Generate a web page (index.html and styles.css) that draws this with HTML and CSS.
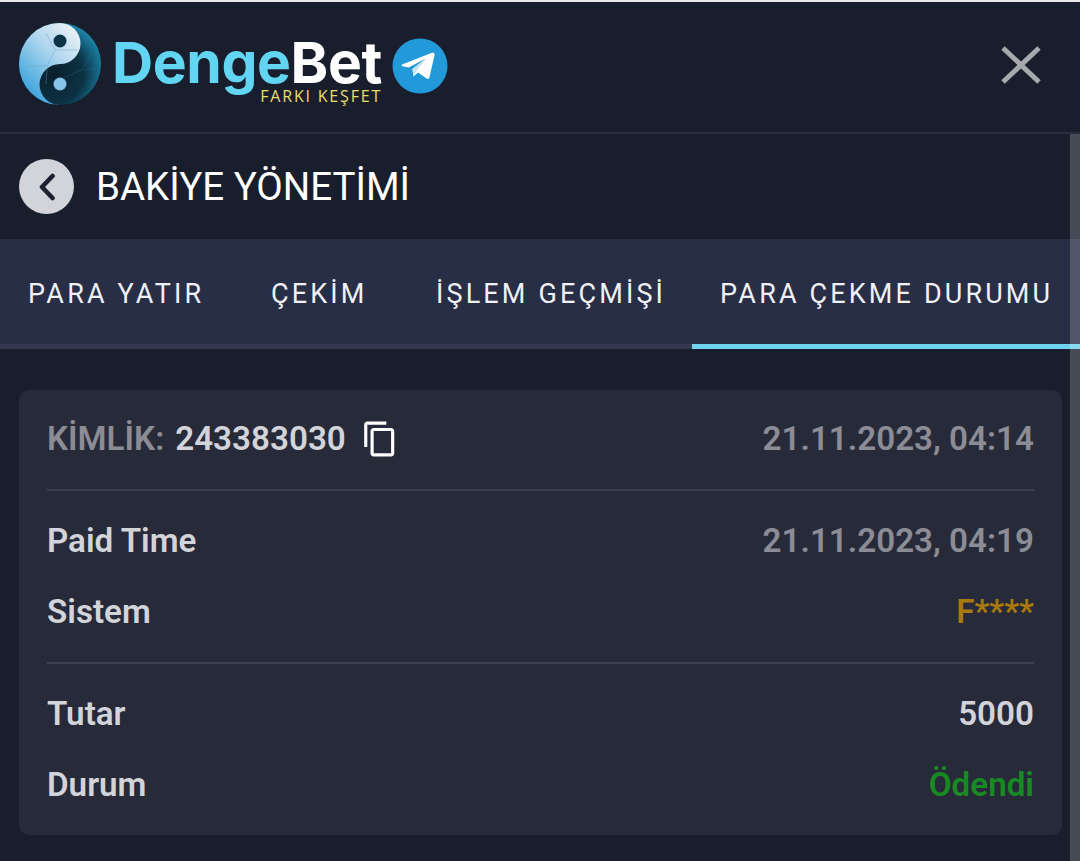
FILE: index.html
```html
<!DOCTYPE html>
<html lang="tr">
<head>
    <meta charset="UTF-8">
    <meta name="viewport" content="width=device-width, initial-scale=1.0">
    <title>DengeBet - Bakiye Yönetimi</title>
    <link rel="stylesheet" href="styles.css">
</head>
<body>
    <header class="topbar">
        <div class="logo">
            <svg class="logo-ball" width="84" height="84" viewBox="18 22 84 84">
                <defs>
                    <linearGradient id="lightSide" x1="0.8" y1="0" x2="0.1" y2="0.9">
                        <stop offset="0" stop-color="#e9f0f5"/>
                        <stop offset="0.4" stop-color="#aed6ee"/>
                        <stop offset="1" stop-color="#2f9ddb"/>
                    </linearGradient>
                    <radialGradient id="darkSide" cx="0.42" cy="0.62" r="0.62">
                        <stop offset="0" stop-color="#0a1f2b"/>
                        <stop offset="0.6" stop-color="#0c3244"/>
                        <stop offset="1" stop-color="#1a7fa3"/>
                    </radialGradient>
                </defs>
                <circle cx="60" cy="64" r="41" fill="url(#darkSide)"/>
                <path d="M60 23A41 41 0 0 0 60 105A20.5 20.5 0 0 1 60 64A20.5 20.5 0 0 0 60 23Z" fill="url(#lightSide)"/>
                <path d="M46 33L55 50L78 50M55 50L47 66L28 66M47 66L46 84" fill="none" stroke="#5c9fc8" stroke-width="0.7" opacity="0.6"/>
                <path d="M64 78L82 70L96 68M82 70L92 52" fill="none" stroke="#2a7898" stroke-width="0.7" opacity="0.4"/>
                <circle cx="60" cy="41" r="6.5" fill="#0d3347"/>
                <circle cx="60" cy="84" r="6.5" fill="#86c4ea"/>
            </svg>
            <div class="logo-text">
                <div class="logo-name">Denge<span class="logo-bet">Bet</span></div>
                <div class="logo-slogan">FARKI KEŞFET</div>
            </div>
            <svg class="telegram" width="56" height="56" viewBox="0 0 56 56">
                <circle cx="28" cy="28" r="27.5" fill="#2299d8"/>
                <path d="M10 26.5L40 14.8C41.6 14.2 43 15.2 42.6 17L37.4 39.6C37 41 35.8 41.4 34.6 40.6L26 34.4L21.6 38.6L20.4 31L34 20.6L16.6 29.6L10.6 28.2C9.6 27.9 9.4 27 10 26.5Z" fill="#ffffff"/>
                <path d="M20.4 31L34 20.6L24 33.4L21.6 38.6Z" fill="#c9e3f2"/>
            </svg>
        </div>
        <svg class="close-icon" width="42" height="40" viewBox="0 0 42 40">
            <path d="M3 3L39 37M39 3L3 37" stroke="#a8a9af" stroke-width="5" fill="none"/>
        </svg>
    </header>

    <div class="title-row">
        <div class="back-btn">
            <svg width="18" height="28" viewBox="0 0 18 28">
                <path d="M14.5 3L4 14L14.5 25" stroke="#1d2230" stroke-width="4.6" stroke-linecap="round" stroke-linejoin="round" fill="none"/>
            </svg>
        </div>
        <div class="title">BAKİYE YÖNETİMİ</div>
    </div>

    <nav class="tabs">
        <div class="tab">PARA YATIR</div>
        <div class="tab">ÇEKİM</div>
        <div class="tab">İŞLEM GEÇMİŞİ</div>
        <div class="tab tab-active">PARA ÇEKME DURUMU</div>
    </nav>

    <main class="content">
        <section class="card">
            <div class="row row-head">
                <div class="kimlik">
                    <span class="muted">KİMLİK:</span>
                    <span class="value">243383030</span>
                    <svg class="copy-icon" width="38" height="38" viewBox="0 0 24 24">
                        <path d="M16 1H4c-1.1 0-2 .9-2 2v14h2V3h12V1zm3 4H8c-1.1 0-2 .9-2 2v14c0 1.1.9 2 2 2h11c1.1 0 2-.9 2-2V7c0-1.1-.9-2-2-2zm0 16H8V7h11v14z" fill="#ffffff"/>
                    </svg>
                </div>
                <span class="muted">21.11.2023, 04:14</span>
            </div>
            <div class="divider"></div>
            <div class="group group-first">
                <div class="row"><span class="value">Paid Time</span><span class="muted">21.11.2023, 04:19</span></div>
                <div class="row"><span class="value">Sistem</span><span class="amber">F****</span></div>
            </div>
            <div class="divider"></div>
            <div class="group">
                <div class="row"><span class="value">Tutar</span><span class="value">5000</span></div>
                <div class="row"><span class="value">Durum</span><span class="green">Ödendi</span></div>
            </div>
        </section>
    </main>

    <div class="scrollbar"></div>
</body>
</html>
```

FILE: styles.css
```css
html, body {
    height: 861px;
    overflow: hidden;
}
body {
    margin: 0;
    background-color: #191e2c;
    font-family: Roboto, "Liberation Sans", sans-serif;
    color: #ffffff;
    border-top: 2px solid #e9e9eb;
    box-sizing: border-box;
}
.topbar {
    height: 130px;
    border-bottom: 2px solid #2a2e3c;
    display: flex;
    align-items: center;
    justify-content: space-between;
    padding: 0 38px 0 18px;
}
.logo {
    display: flex;
    align-items: center;
    margin-top: -4px;
}
.logo-ball {
    display: block;
    margin-top: -2px;
}
.logo-text {
    margin-left: 10px;
    margin-top: 13px;
    width: 270px;
}
.logo-name {
    font-family: Inter, "Open Sans", sans-serif;
    font-weight: 700;
    font-size: 57px;
    line-height: 48px;
    letter-spacing: -0.4px;
    color: #62d5f3;
    white-space: nowrap;
}
.logo-bet {
    color: #ffffff;
}
.logo-slogan {
    font-family: "Open Sans", sans-serif;
    font-size: 16px;
    line-height: 18px;
    letter-spacing: 1.8px;
    color: #e9df6c;
    text-align: right;
}
.telegram {
    margin-left: 10px;
    margin-top: 1px;
}
.close-icon {
    margin-top: -4px;
}
.title-row {
    height: 105px;
    display: flex;
    align-items: center;
    padding-left: 19px;
}
.back-btn {
    width: 55px;
    height: 55px;
    border-radius: 50%;
    background-color: #d3d4da;
    display: flex;
    align-items: center;
    justify-content: center;
    margin-right: 22px;
}
.title {
    font-size: 38.5px;
    color: #ffffff;
}
.tabs {
    height: 105px;
    background-color: #282e45;
    border-bottom: 5px solid #343950;
    display: grid;
    grid-template-columns: 243px 165px 284px 388px;
}
.tab {
    padding-left: 28px;
    display: flex;
    align-items: center;
    font-size: 27px;
    letter-spacing: 3.15px;
    color: #f0f1f4;
    white-space: nowrap;
}
.tab-active {
    height: 110px;
    box-sizing: border-box;
    border-bottom: 5px solid #6dd3ef;
    padding: 5px 0 0 28px;
}
.content {
    padding: 41px 18px 0 19px;
}
.card {
    background-color: #272a38;
    border-radius: 10px;
    height: 445px;
    box-sizing: border-box;
    padding: 0 28px;
}
.row {
    display: flex;
    align-items: center;
    justify-content: space-between;
    font-size: 33.2px;
    font-weight: 600;
    height: 71px;
}
.row-head {
    height: 99px;
    box-sizing: border-box;
    padding-bottom: 2px;
}
.kimlik {
    display: flex;
    align-items: center;
}
.kimlik .value {
    margin-left: 11px;
}
.copy-icon {
    margin-left: 15px;
}
.divider {
    height: 2px;
    background-color: #3d404e;
}
.group {
    padding: 14px 0;
}
.group-first {
    padding-bottom: 15px;
}
.muted {
    color: #8b8c95;
}
.value {
    color: #d3d4da;
}
.amber {
    color: #a8790d;
}
.green {
    color: #188a24;
}
.scrollbar {
    position: absolute;
    top: 134px;
    right: 0;
    bottom: 0;
    width: 10px;
    background-color: rgba(255, 255, 255, 0.2);
}
```
